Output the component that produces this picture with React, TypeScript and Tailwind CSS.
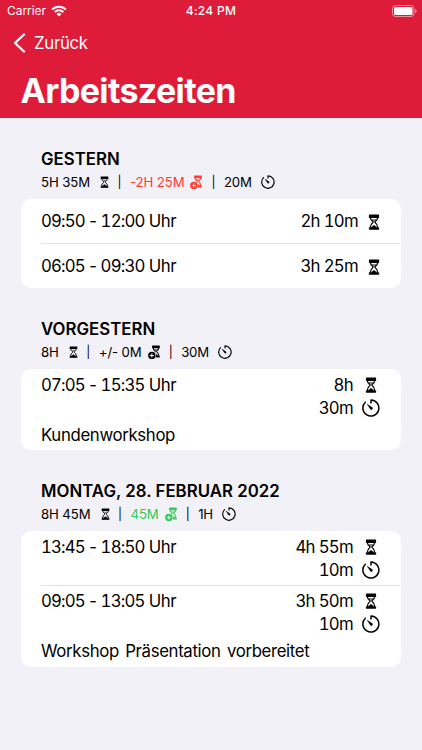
import clsx from "clsx";

type Entry = {
  start: string;
  end: string;
  worked: string;
  pause?: string;
  note?: string;
};

type Day = {
  title: string;
  total: string;
  balance: string;
  balanceColor: string;
  pause: string;
  entries: Entry[];
};

const days: Day[] = [
  {
    title: "GESTERN",
    total: "5H 35M",
    balance: "-2H 25M",
    balanceColor: "text-[#ff3b30]",
    pause: "20M",
    entries: [
      { start: "09:50", end: "12:00", worked: "2h 10m" },
      { start: "06:05", end: "09:30", worked: "3h 25m" },
    ],
  },
  {
    title: "VORGESTERN",
    total: "8H",
    balance: "+/- 0M",
    balanceColor: "text-black",
    pause: "30M",
    entries: [
      { start: "07:05", end: "15:35", worked: "8h", pause: "30m", note: "Kundenworkshop" },
    ],
  },
  {
    title: "MONTAG, 28. FEBRUAR 2022",
    total: "8H 45M",
    balance: "45M",
    balanceColor: "text-[#34c759]",
    pause: "1H",
    entries: [
      { start: "13:45", end: "18:50", worked: "4h 55m", pause: "10m" },
      {
        start: "09:05",
        end: "13:05",
        worked: "3h 50m",
        pause: "10m",
        note: "Workshop Präsentation vorbereitet",
      },
    ],
  },
];

function HourglassShape() {
  return (
    <>
      <path d="M1.4 .5h9.2a.5.5 0 0 1 .5.5v2.600a.5.5 0 0 1-.5.5H1.4a.5.5 0 0 1-.5-.5V1a.5.5 0 0 1 .5-.5Z" fill="currentColor" />
      <path d="M2.300 3.500c.2 2 1.100 3 2.400 3.900.5.400.5.900 0 1.300C3.300 9.700 2.400 11 2.300 13.500M9.700 3.500c-.2 2-1.100 3-2.400 3.900-.5.400-.5.900 0 1.300 1.400 1 2.300 2.300 2.400 4.800" fill="none" stroke="currentColor" strokeWidth="1.300" />
      <path d="M3.200 4.900h5.600L6 8Z" fill="currentColor" opacity=".5" />
      <path d="M1.200 15.500v-2h1.900L6 11.300l2.900 2.200h1.900v2Z" fill="currentColor" stroke="currentColor" strokeWidth=".5" strokeLinejoin="round" />
    </>
  );
}

function Hourglass({ className }: { className?: string }) {
  return (
    <svg viewBox="0 0 12 16" className={clsx("shrink-0", className)}>
      <HourglassShape />
    </svg>
  );
}

function HourglassPlus({ className }: { className?: string }) {
  return (
    <svg viewBox="0 0 17 20" className={clsx("shrink-0", className)}>
      <g transform="translate(4.600 0) scale(1.030 1.060)">
        <HourglassShape />
      </g>
      <circle cx="5.200" cy="14" r="5.800" fill="#f2f1f7" />
      <circle cx="5.200" cy="14" r="5" fill="currentColor" />
      <path d="M5.200 11.300v5.400M2.500 14h5.400" stroke="#f2f1f7" strokeWidth="1.400" />
    </svg>
  );
}

function Timer({ className }: { className?: string }) {
  return (
    <svg viewBox="0 0 18 18" fill="none" className={clsx("shrink-0", className)}>
      <path
        d="M9 3.900V1.050A8 8 0 1 1 3.300 3.300"
        stroke="currentColor"
        strokeWidth="1.500"
        strokeLinecap="round"
        strokeLinejoin="round"
      />
      <path d="M5.300 5.300 10.200 8.600A1.150 1.150 0 0 1 8.500 10.200Z" fill="currentColor" stroke="currentColor" strokeWidth=".5" strokeLinejoin="round" />
    </svg>
  );
}

function StatusBar() {
  return (
    <div className="grid h-[22px] grid-cols-3 items-center pr-[5px] pl-[7px]">
      <div className="flex items-center gap-[5px]">
        <span className="text-[12px] tracking-[-0.05px]">Carrier</span>
        <svg viewBox="0 0 16 12" className="h-[12px] w-[16px]" fill="none" stroke="currentColor" strokeWidth="2">
          <path d="M1.100 4.500a9.800 9.800 0 0 1 13.800 0M3.600 7.100a6.200 6.200 0 0 1 8.800 0" />
          <path d="M5.500 9 8 11.500 10.500 9a3.500 3.500 0 0 0-5 0Z" fill="currentColor" stroke="none" />
        </svg>
      </div>
      <span className="pr-[2px] text-center text-[12px] font-medium tracking-[0.3px]">4:24 PM</span>
      <svg viewBox="0 0 25 12" className="h-[12px] w-[25px] justify-self-end">
        <rect x=".5" y=".5" width="21.500" height="11" rx="3" fill="none" stroke="currentColor" opacity=".5" />
        <rect x="2" y="2" width="18.500" height="8" rx="1.500" fill="currentColor" />
        <path d="M23.300 4v4c.8-.3 1.300-1.100 1.300-2s-.5-1.700-1.300-2Z" fill="currentColor" opacity=".55" />
      </svg>
    </div>
  );
}

function Separator() {
  return <span className="w-[21px] text-center text-[12px]">|</span>;
}

function DayHeader({ day }: { day: Day }) {
  return (
    <div className="h-[81px] pt-[31px] pl-[20px]">
      <h2 className="text-[16.8px] leading-[21px] font-semibold tracking-[0.03px]">
        {day.title}
      </h2>
      <div className="mt-[3px] flex h-[18px] items-center text-[13.2px] leading-[18px]">
        <span className="tracking-[-0.1px]">{day.total}</span>
        <Hourglass className="ml-[10px] h-[12px] w-[9px]" />
        <Separator />
        <span className={clsx("flex items-center", day.balanceColor)}>
          <span className="tracking-[-0.1px]">{day.balance}</span>
          <HourglassPlus className="ml-[6px] h-[15px] w-[12.5px]" />
        </span>
        <Separator />
        <span className="tracking-[-0.2px]">{day.pause}</span>
        <Timer className="ml-[9px] h-[14px] w-[14px]" />
      </div>
    </div>
  );
}

function EntryRow({ entry, divided }: { entry: Entry; divided: boolean }) {
  return (
    <div
      className={clsx(
        "ml-[20px] pr-[21px]",
        divided && "border-t border-[#e3e3e6]",
        !entry.pause && "flex flex-col justify-center pt-[1px]",
        !entry.pause && (divided ? "h-[45px]" : "h-[44px]"),
        entry.pause && (divided ? "pt-[4px]" : "pt-[5px]"),
        entry.pause && (entry.note ? (divided ? "h-[82px]" : "h-[81px]") : "h-[54px]")
      )}
    >
      <div className="flex justify-between">
        <span className="tracking-[-0.5px]">
          <span className="tracking-[-0.82px] tabular-nums">{entry.start}</span>
          {" - "}
          <span className="tracking-[-0.82px] tabular-nums">{entry.end}</span>
          {" Uhr"}
        </span>
        <div className="flex flex-col items-end">
          <div className="flex items-center">
            <span className="tracking-[-0.7px] tabular-nums">{entry.worked}</span>
            {entry.pause ? (
              <span className="ml-[9px] flex w-[18px] justify-center">
                <Hourglass className="h-[16px] w-[12px]" />
              </span>
            ) : (
              <Hourglass className="ml-[10px] h-[16px] w-[12px]" />
            )}
          </div>
          {entry.pause && (
            <div className="flex items-center gap-[9px]">
              <span className="tracking-[-0.7px] tabular-nums">{entry.pause}</span>
              <Timer className="h-[18px] w-[18px]" />
            </div>
          )}
        </div>
      </div>
      {entry.note && <p className="mt-[4.5px] [word-spacing:2px]">{entry.note}</p>}
    </div>
  );
}

export default function App() {
  return (
    <div className="flex h-[750px] w-[422px] flex-col overflow-hidden bg-[#f2f1f7] font-['Inter',sans-serif] text-black">
      <header className="h-[118px] shrink-0 bg-[#df1b3a] text-white">
        <StatusBar />
        <button className="flex h-[42px] items-center gap-[8px] pl-[13px]">
          <svg viewBox="0 0 13 20" className="h-[20px] w-[13px]" fill="none" stroke="currentColor" strokeWidth="2.400" strokeLinecap="round" strokeLinejoin="round">
            <path d="M11 1.500 2 10l9 8.500" />
          </svg>
          <span className="pt-[2px] text-[16.8px] tracking-[-0.3px]">Zurück</span>
        </button>
        <h1 className="mt-[6px] pl-[20.5px] text-[34px] leading-[42px] font-bold tracking-[-0.65px]">
          Arbeitszeiten
        </h1>
      </header>
      <main className="px-[21px]">
        {days.map((day) => (
          <section key={day.title}>
            <DayHeader day={day} />
            <div className="overflow-hidden rounded-[10px] bg-white text-[16.8px] leading-[22.5px] tracking-[-0.35px]">
              {day.entries.map((entry, index) => (
                <EntryRow key={entry.start} entry={entry} divided={index > 0} />
              ))}
            </div>
          </section>
        ))}
      </main>
    </div>
  );
}
